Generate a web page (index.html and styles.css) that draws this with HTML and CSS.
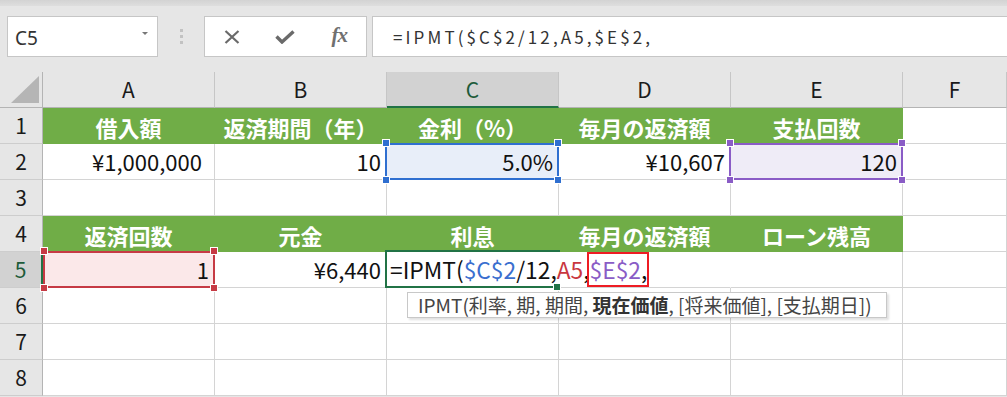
FILE: index.html
```html
<!DOCTYPE html>
<html lang="ja">
<head>
<meta charset="utf-8">
<title>IPMT</title>
<link rel="stylesheet" href="styles.css">
</head>
<body>
<div class="app">
  <div class="topband"></div>
  <div class="formula-row">
    <div class="namebox"><span class="nb-text">C5</span><span class="nb-arrow"></span></div>
    <div class="sep"><i></i><i></i><i></i></div>
    <div class="fbuttons">
      <span class="fb">
        <svg width="16" height="14" viewBox="0 0 16 14"><path d="M1.5 1 L14.5 13 M14.5 1 L1.5 13" stroke="#6a6a6a" stroke-width="2.2" fill="none"/></svg>
      </span>
      <span class="fb">
        <svg width="20" height="14" viewBox="0 0 20 14"><path d="M1.5 6.5 L7 12 L18.5 1.5" stroke="#6a6a6a" stroke-width="3.4" fill="none" stroke-linejoin="miter"/></svg>
      </span>
      <span class="fb fx">fx</span>
    </div>
    <div class="finput">=IPMT($C$2/12,A5,$E$2,</div>
  </div>

  <div class="sheet">
    <div class="corner"><span class="tri"></span></div>
    <div class="ch">A</div>
    <div class="ch">B</div>
    <div class="ch sel">C</div>
    <div class="ch">D</div>
    <div class="ch">E</div>
    <div class="ch">F</div>

    <div class="rh">1</div>
    <div class="c hd">借入額</div>
    <div class="c hd">返済期間（年）</div>
    <div class="c hd">金利（%）</div>
    <div class="c hd">毎月の返済額</div>
    <div class="c hd">支払回数</div>
    <div class="c"></div>

    <div class="rh">2</div>
    <div class="c num yen">¥1,000,000</div>
    <div class="c num">10</div>
    <div class="c num ref blue"><span class="h tl"></span><span class="h tr"></span><span class="h bl"></span><span class="h br"></span>5.0%</div>
    <div class="c num">¥10,607</div>
    <div class="c num ref purple"><span class="h tl"></span><span class="h tr"></span><span class="h bl"></span><span class="h br"></span>120</div>
    <div class="c"></div>

    <div class="rh">3</div>
    <div class="c"></div><div class="c"></div><div class="c"></div><div class="c"></div><div class="c"></div><div class="c"></div>

    <div class="rh">4</div>
    <div class="c hd">返済回数</div>
    <div class="c hd">元金</div>
    <div class="c hd">利息</div>
    <div class="c hd">毎月の返済額</div>
    <div class="c hd">ローン残高</div>
    <div class="c"></div>

    <div class="rh sel">5</div>
    <div class="c num ref red"><span class="h tl"></span><span class="h tr"></span><span class="h bl"></span><span class="h br"></span>1</div>
    <div class="c num">¥6,440</div>
    <div class="c active">
      <span class="edit">=IPMT(<span class="k-blue">$C$2</span>/12,<span class="k-red">A5</span>,<span class="mark"><span class="k-purple">$E$2</span>,</span></span>
      <span class="fill-handle"></span>
      <div class="tip">IPMT(利率, 期, 期間, <b>現在価値</b>, [将来価値], [支払期日])</div>
    </div>
    <div class="c nol"></div>
    <div class="c"></div>
    <div class="c"></div>

    <div class="rh">6</div>
    <div class="c"></div><div class="c"></div><div class="c"></div><div class="c"></div><div class="c"></div><div class="c"></div>
    <div class="rh">7</div>
    <div class="c"></div><div class="c"></div><div class="c"></div><div class="c"></div><div class="c"></div><div class="c"></div>
    <div class="rh">8</div>
    <div class="c"></div><div class="c"></div><div class="c"></div><div class="c"></div><div class="c"></div><div class="c"></div>
  </div>
</div>
</body>
</html>
```

FILE: styles.css
```css
* { box-sizing: border-box; }
html, body { margin: 0; padding: 0; }
body {
  background: #e6e6e6;
  font-family: "Noto Sans CJK JP", "Noto Sans", sans-serif;
  width: 1007px;
  height: 397px;
  overflow: hidden;
}
.app { display: flex; flex-direction: column; }
.topband {
  height: 6px;
  background: linear-gradient(#d3d3d3, #dedede);
}
.formula-row {
  display: flex;
  height: 41px;
  margin-top: 10px;
  padding-left: 7px;
}
.namebox {
  width: 151px;
  background: #fff;
  border: 1px solid #c6c6c6;
  display: flex;
  align-items: center;
  justify-content: space-between;
  padding: 0 9px 0 7px;
}
.nb-text {
  font-family: "Noto Sans", sans-serif;
  font-size: 19px;
  color: #333;
  margin-top: 2px;
}
.nb-arrow {
  width: 0; height: 0;
  border-left: 3px solid transparent;
  border-right: 3px solid transparent;
  border-top: 3px solid #777;
  margin-bottom: 6px;
}
.sep {
  width: 46px;
  display: flex;
  flex-direction: column;
  align-items: center;
  justify-content: center;
  gap: 3px;
}
.sep i { display: block; width: 3px; height: 3px; background: #c2c2c2; }
.fbuttons {
  width: 163px;
  background: #fff;
  border: 1px solid #c6c6c6;
  display: grid;
  grid-template-columns: 1fr 1fr 1fr;
  align-items: center;
  justify-items: center;
}
.fb { display: flex; align-items: center; justify-content: center; }
.fx {
  font-family: "Liberation Serif", serif;
  font-style: italic;
  font-size: 21px;
  color: #707070;
  font-weight: bold;
  letter-spacing: -1px;
  margin-top: -2px;
}
.finput {
  flex: 1;
  margin-left: 5px;
  background: #fff;
  border: 1px solid #c6c6c6;
  border-right: none;
  padding-left: 20px;
  font-size: 17px;
  letter-spacing: 3.1px;
  color: #333;
  display: flex;
  align-items: center;
  white-space: nowrap;
}

.sheet {
  margin-top: 15px;
  display: grid;
  grid-template-columns: 43px repeat(5, 172px) 1fr;
  grid-auto-rows: 36px;
}
.corner {
  border-right: 1px solid #b4b4b4;
  border-bottom: 1px solid #b4b4b4;
  display: flex;
  align-items: flex-end;
  justify-content: flex-end;
  padding: 0 3px 4px 0;
}
.tri {
  width: 0; height: 0;
  border-left: 28px solid transparent;
  border-bottom: 27px solid #b5b5b5;
}
.ch {
  background: #e6e6e6;
  border-right: 1px solid #c6c6c6;
  border-bottom: 1px solid #b4b4b4;
  text-align: center;
  font-size: 21px;
  line-height: 35px;
  color: #1a1a1a;
}
.ch.sel {
  background: #d2d2d2;
  border-bottom: 2px solid #217346;
  color: #1d5b3a;
}
.rh {
  background: #e6e6e6;
  border-right: 1px solid #b4b4b4;
  border-bottom: 1px solid #cdcdcd;
  text-align: center;
  font-size: 21px;
  line-height: 35px;
  color: #1a1a1a;
}
.rh.sel {
  background: #d2d2d2;
  border-right: 2px solid #217346;
  color: #1d5b3a;
}
.c {
  position: relative;
  background: #fff;
  border-right: 1px solid #d4d4d4;
  border-bottom: 1px solid #d4d4d4;
  font-size: 22px;
  line-height: 35px;
  color: #111;
  white-space: nowrap;
}
.c.hd {
  background: #70ad47;
  border-color: #70ad47;
  color: #fff;
  font-weight: bold;
  text-align: center;
  padding-top: 2px;
}
.c.num { text-align: right; padding-right: 5px; }
.c.yen { padding-right: 12px; }
.c.nol { border-right-color: #fff; }

.ref::before {
  content: "";
  position: absolute;
  top: -1px; left: -2px; right: -1px; bottom: -1px;
  border: 2px solid currentColor;
  pointer-events: none;
}
.ref .h {
  position: absolute;
  width: 6px; height: 6px;
  background: currentColor;
  outline: 1px solid #fff;
  z-index: 2;
}
.ref .tl { top: -4px; left: -4px; }
.ref .tr { top: -4px; right: -3px; }
.ref .bl { bottom: -4px; left: -4px; }
.ref .br { bottom: -4px; right: -3px; }
.ref.blue { background: #e8eef9; color: #111; }
.ref.blue::before, .ref.blue .h { color: #2f6fd0; }
.ref.purple { background: #efecf7; color: #111; }
.ref.purple::before, .ref.purple .h { color: #8a5cc6; }
.ref.red { background: #fbe8e9; color: #111; }
.ref.red::before { left: 0; }
.ref.red::before, .ref.red .h { color: #c63a44; }
.ref.red .tl, .ref.red .bl { left: -2px; }

.c.active {
  z-index: 3;
  border-right-color: #fff;
  padding-left: 3px;
  overflow: visible;
  font-size: 22.8px;
}
.c.active::before {
  content: "";
  position: absolute;
  top: -2px; left: -2px; right: -2px; bottom: -1px;
  border: 2px solid #217346;
  border-right: none;
}
.fill-handle {
  position: absolute;
  right: -2px; bottom: -3px;
  width: 6px; height: 6px;
  background: #217346;
  outline: 1px solid #fff;
}
.edit { position: relative; color: #111; }
.k-blue { color: #3a6fcf; }
.k-red { color: #c9373f; }
.k-purple { color: #8a5cc6; }
.mark { position: relative; }
.mark::after {
  content: "";
  position: absolute;
  left: -3px; right: -2px;
  top: -1px; bottom: -1px;
  border: 2px solid #ee1c24;
}
.tip {
  position: absolute;
  left: 20px;
  top: 40px;
  width: 480px;
  height: 26px;
  background: #fff;
  border: 1px solid #c8c8c8;
  box-shadow: 2px 2px 2px rgba(0,0,0,0.12);
  padding-left: 10px;
  font-size: 19px;
  line-height: 24px;
  color: #444;
}
.tip b { color: #333; }
```
